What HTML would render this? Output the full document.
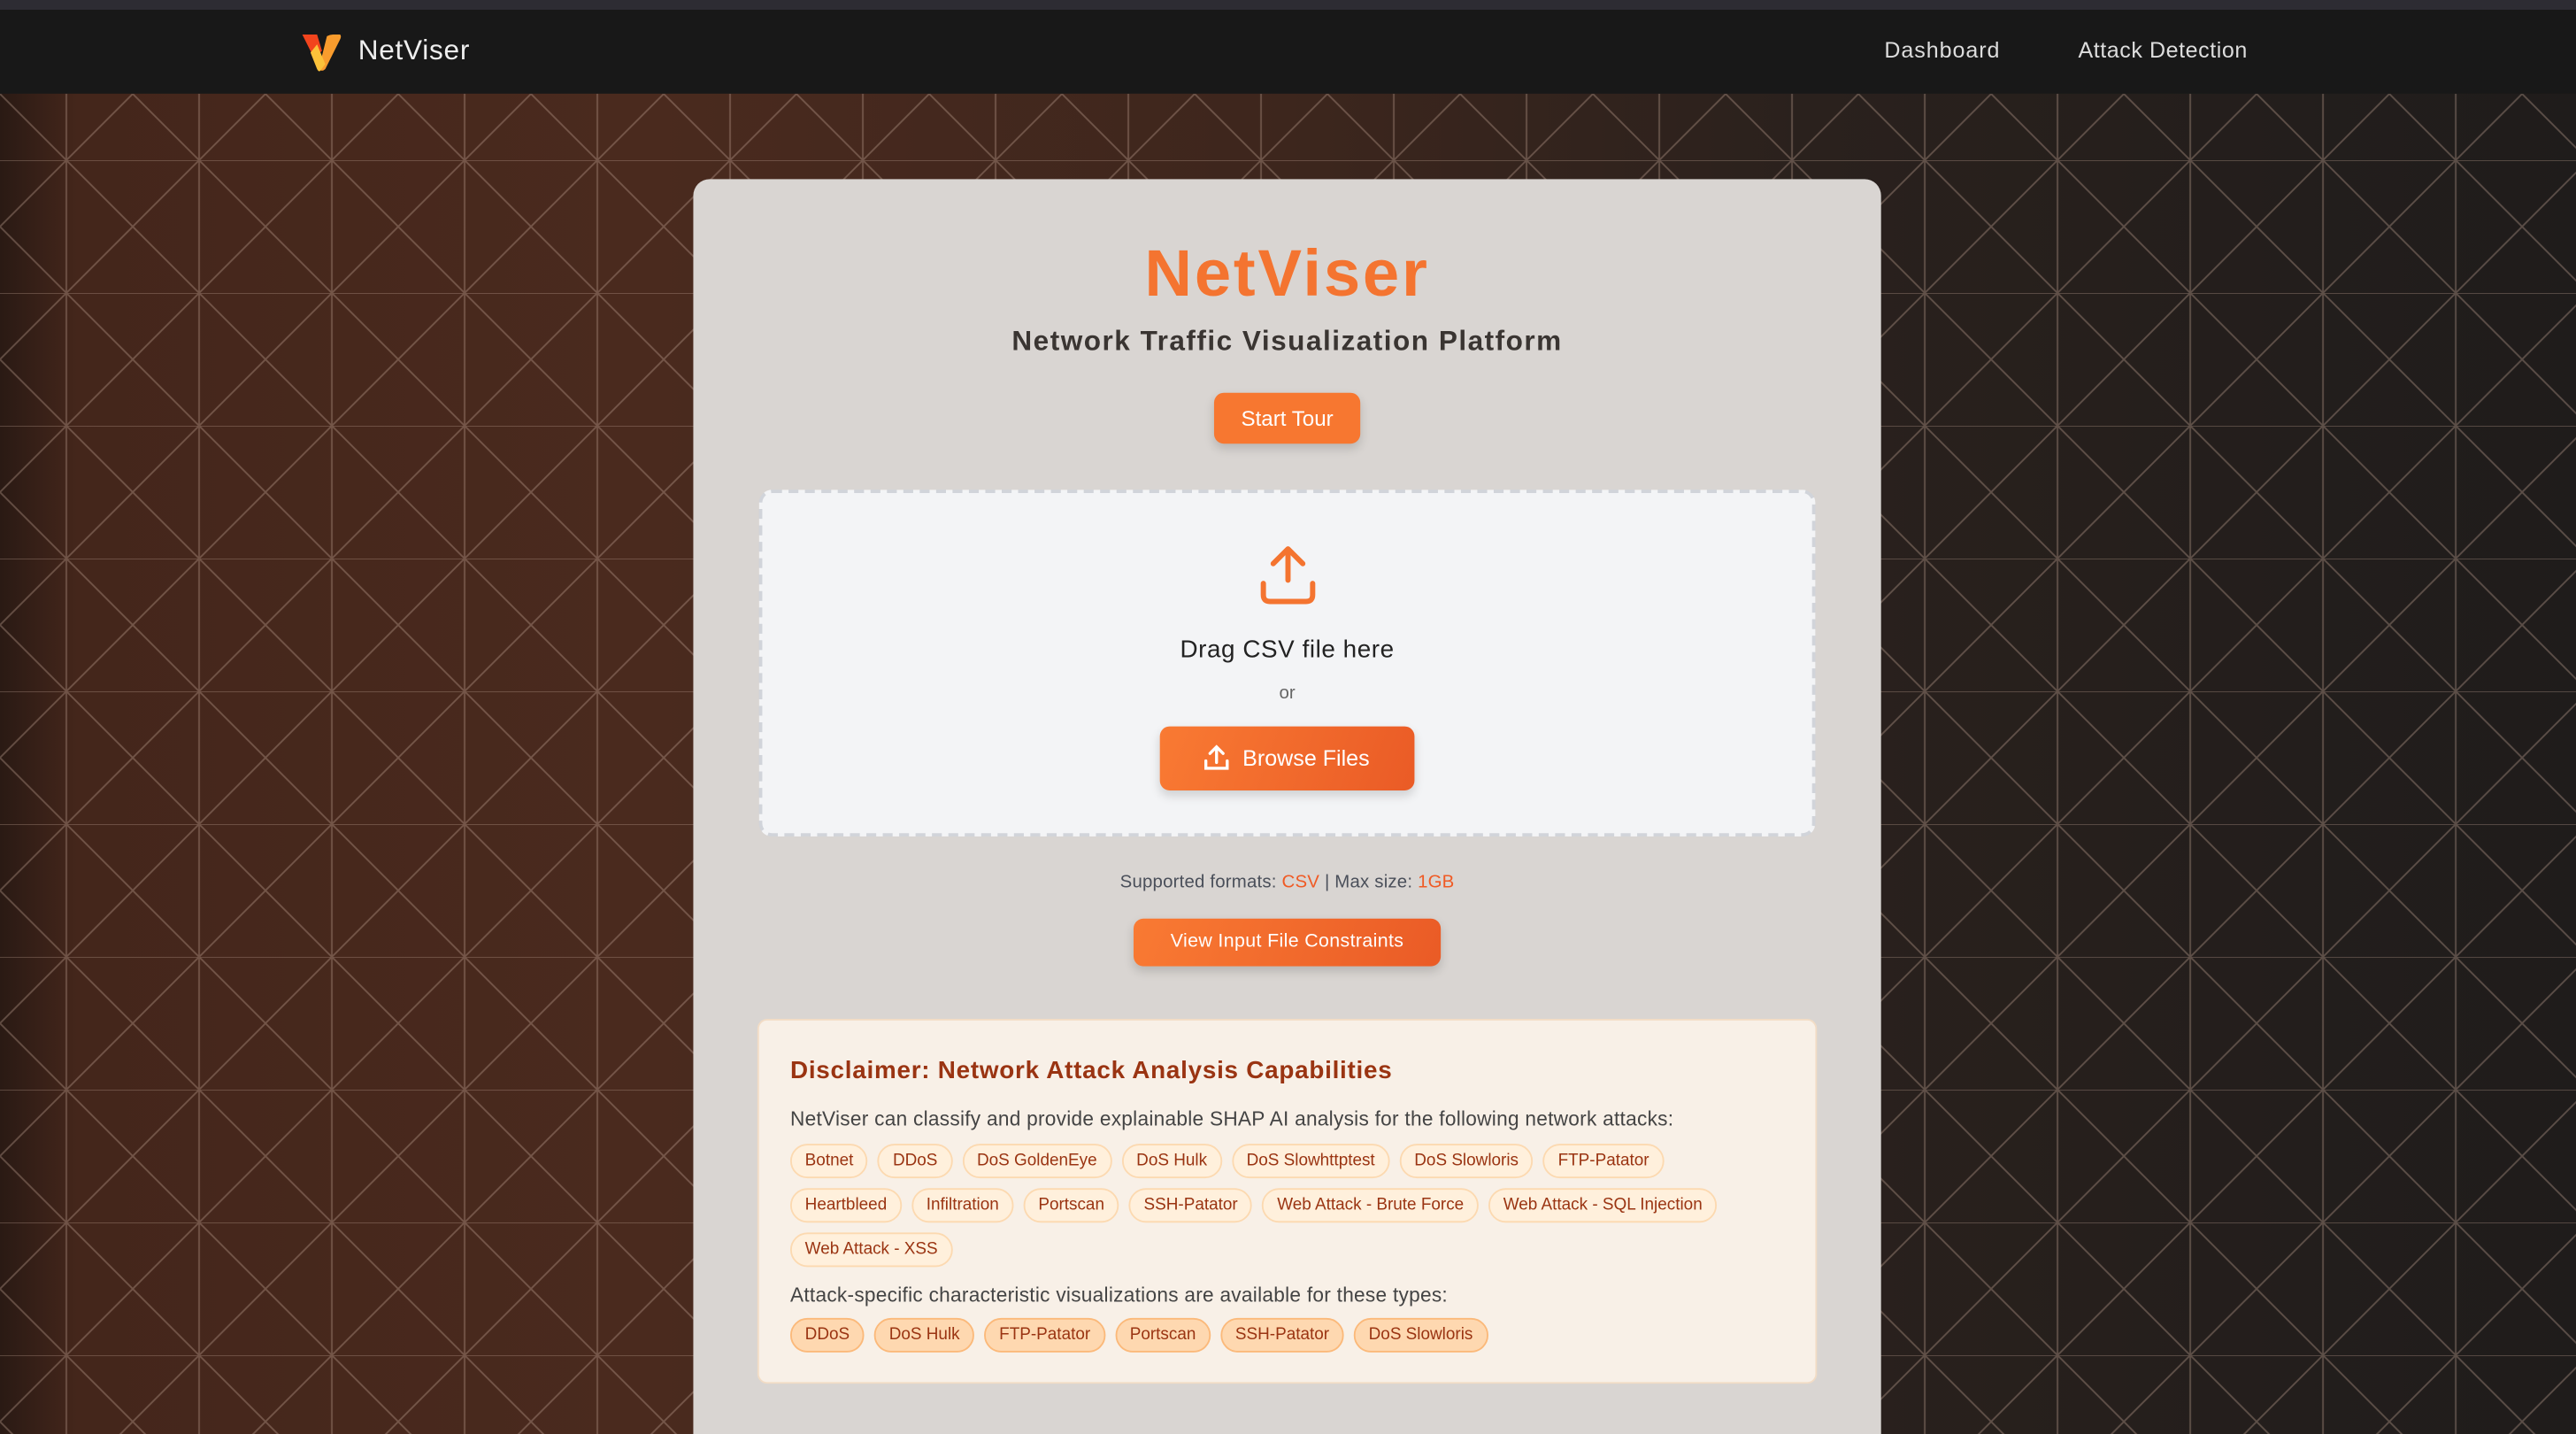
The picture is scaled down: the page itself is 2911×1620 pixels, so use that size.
<!DOCTYPE html>
<html><head><meta charset="utf-8"><style>
*{margin:0;padding:0;box-sizing:border-box}
html,body{width:2911px;height:1620px;overflow:hidden;background:#1e1c1c}
#w{width:1568px;height:873px;transform:scale(1.8565);transform-origin:0 0;position:relative;font-family:"Liberation Sans",sans-serif;overflow:hidden}
.top{position:absolute;left:0;top:0;width:1568px;height:5.5px;background:#2d2c33}
.hdr{position:absolute;left:0;top:5.5px;width:1568px;height:51.5px;background:#181818}
.bg{position:absolute;left:0;top:57px;width:1568px;height:816px;background:linear-gradient(90deg,#2a1a14 0%,#44261b 3%,#4a2a1e 25%,#3d261d 50%,#2a211d 70%,#1f1c1b 100%)}
.card{position:absolute;left:422px;top:109px;width:723px;height:800px;background:#d9d5d2;border-radius:10px}
.c{position:absolute;left:0;width:100%;text-align:center}
.btn{position:absolute;color:#fff;border-radius:6px;background:linear-gradient(110deg,#f97a33,#ea5b26);box-shadow:0 3px 6px rgba(0,0,0,.15);text-align:center}
.tag{display:inline-block;height:21px;line-height:19px;padding:0 8px;border-radius:11px;background:#fff0dc;border:1px solid #fcd9b0;color:#9a3412;font-size:10.2px;margin-right:6px;margin-bottom:6px;white-space:nowrap}
.tag2{background:#fed8b0;border-color:#fbb97a}
</style></head><body><div id="w">
<div class="top"></div>
<div class="hdr">
<svg style="position:absolute;left:184px;top:15px" width="24" height="23" viewBox="0 0 24 23"><path d="M0 0H9L12 10L7 14Z" fill="#f2441d"/><path d="M15 1Q17 0 19 0L23 0Q24 1 23 3L14 21Q12 23 10 21Z" fill="#f99c2d"/><path d="M5 11L9 6L14 18L11 22Q10 23 9 21Z" fill="#fcc23a"/></svg>
<div style="position:absolute;left:218px;top:15px;font-size:17px;color:#eee;letter-spacing:0.4px">NetViser</div>
<div style="position:absolute;left:1147px;top:17px;font-size:13.5px;color:#ddd;letter-spacing:0.5px">Dashboard</div>
<div style="position:absolute;left:1265px;top:17px;font-size:13.5px;color:#ddd;letter-spacing:0.3px">Attack Detection</div>
</div>
<div class="bg"><svg width="1568" height="816"><defs><pattern id="p" width="80.8" height="80.8" patternUnits="userSpaceOnUse" x="0" y="40.5"><g stroke="rgba(190,160,145,0.38)" stroke-width="1" fill="none"><path d="M40.4 0V80.8M0 0H80.8M40.4 0L80.8 40.4L40.4 80.8L0 40.4Z"/></g></pattern></defs><rect width="1568" height="816" fill="url(#p)"/></svg></div>
<div class="card">
<div class="c" style="top:36px;font-size:40px;font-weight:bold;color:#f47430;letter-spacing:1.5px">NetViser</div>
<div class="c" style="top:89px;font-size:17px;font-weight:bold;color:#3a3532;letter-spacing:0.8px">Network Traffic Visualization Platform</div>
<div class="btn" style="left:317px;top:130px;width:89px;height:31px;line-height:31px;font-size:13px;background:#f77730">Start Tour</div>
<div style="position:absolute;left:40px;top:189px;width:643px;height:211px;border:2px dashed #d1d4da;border-radius:8px;background:#f3f4f6">
<svg style="position:absolute;left:302px;top:31px" width="36" height="38" viewBox="0 0 36 38"><g stroke="#f47430" stroke-width="3.2" fill="none" stroke-linecap="round" stroke-linejoin="round"><path d="M18 22V3M9 12L18 3L27 12M3 24V31Q3 35 7 35H29Q33 35 33 31V24"/></g></svg>
<div class="c" style="top:87px;font-size:15px;color:#222;letter-spacing:0.3px">Drag CSV file here</div>
<div class="c" style="top:116px;font-size:11px;color:#666">or</div>
<div class="btn" style="left:242px;top:142px;width:155px;height:39px;line-height:39px;font-size:13.5px"><svg style="vertical-align:-3px;margin-right:8px" width="15" height="16" viewBox="0 0 15 16"><g stroke="#fff" stroke-width="1.8" fill="none" stroke-linecap="round"><path d="M7.5 11V1.5M3.5 5.5L7.5 1.5L11.5 5.5M1 10V14.5H14V10"/></g></svg>Browse Files</div>
</div>
<div class="c" style="top:422px;font-size:11px;color:#4a4f5a;letter-spacing:0.1px">Supported formats: <span style="color:#f05a24">CSV</span> | Max size: <span style="color:#f05a24">1GB</span></div>
<div class="btn" style="left:268px;top:450px;width:187px;height:29px;line-height:29px;font-size:11.5px;letter-spacing:0.2px">View Input File Constraints</div>
<div style="position:absolute;left:39px;top:511px;width:645px;height:222px;background:#f8f0e7;border:1px solid #f2dcc5;border-radius:6px;padding:22px 0 0 19px">
<div style="font-size:15px;font-weight:bold;color:#9a3412;letter-spacing:0.4px">Disclaimer: Network Attack Analysis Capabilities</div>
<div style="font-size:12.2px;color:#444;margin-top:14px;margin-bottom:8px;letter-spacing:0.15px">NetViser can classify and provide explainable SHAP AI analysis for the following network attacks:</div>
<div style="width:625px;font-size:0"><span class="tag">Botnet</span><span class="tag">DDoS</span><span class="tag">DoS GoldenEye</span><span class="tag">DoS Hulk</span><span class="tag">DoS Slowhttptest</span><span class="tag">DoS Slowloris</span><span class="tag">FTP-Patator</span><br><span class="tag">Heartbleed</span><span class="tag">Infiltration</span><span class="tag">Portscan</span><span class="tag">SSH-Patator</span><span class="tag">Web Attack - Brute Force</span><span class="tag">Web Attack - SQL Injection</span><br><span class="tag">Web Attack - XSS</span></div>
<div style="font-size:12.2px;color:#444;margin-top:4px;margin-bottom:7px;letter-spacing:0.15px">Attack-specific characteristic visualizations are available for these types:</div>
<div style="font-size:0"><span class="tag tag2">DDoS</span><span class="tag tag2">DoS Hulk</span><span class="tag tag2">FTP-Patator</span><span class="tag tag2">Portscan</span><span class="tag tag2">SSH-Patator</span><span class="tag tag2">DoS Slowloris</span></div>
</div>
</div>
</div></body></html>
